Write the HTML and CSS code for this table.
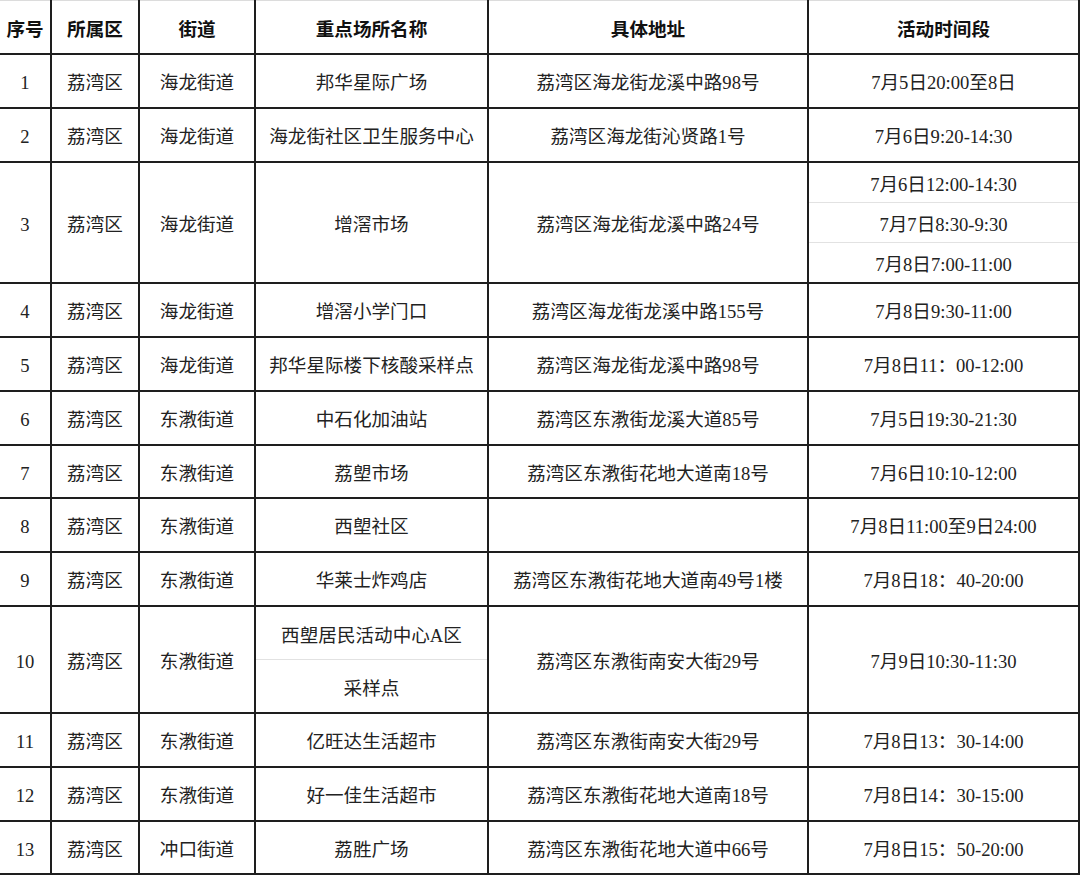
FILE: index.html
```html
<!DOCTYPE html>
<html lang="zh-CN">
<head>
<meta charset="utf-8">
<title>重点场所</title>
<link rel="stylesheet" href="styles.css">
</head>
<body>
<table class="sites">
  <colgroup>
    <col class="c-no">
    <col class="c-dist">
    <col class="c-street">
    <col class="c-name">
    <col class="c-addr">
    <col class="c-time">
  </colgroup>
  <thead>
    <tr class="h-head">
      <th>序号</th><th>所属区</th><th>街道</th><th>重点场所名称</th><th>具体地址</th><th>活动时间段</th>
    </tr>
  </thead>
  <tbody>
    <tr class="h54"><td>1</td><td>荔湾区</td><td>海龙街道</td><td>邦华星际广场</td><td>荔湾区海龙街龙溪中路98号</td><td>7月5日20:00至8日</td></tr>
    <tr class="h54"><td>2</td><td>荔湾区</td><td>海龙街道</td><td>海龙街社区卫生服务中心</td><td>荔湾区海龙街沁贤路1号</td><td>7月6日9:20-14:30</td></tr>
    <tr class="h41"><td rowspan="3">3</td><td rowspan="3">荔湾区</td><td rowspan="3">海龙街道</td><td rowspan="3">增滘市场</td><td rowspan="3">荔湾区海龙街龙溪中路24号</td><td class="sub-top">7月6日12:00-14:30</td></tr>
    <tr class="h40"><td class="sub-mid">7月7日8:30-9:30</td></tr>
    <tr class="h40"><td class="sub-bot">7月8日7:00-11:00</td></tr>
    <tr class="h54"><td>4</td><td>荔湾区</td><td>海龙街道</td><td>增滘小学门口</td><td>荔湾区海龙街龙溪中路155号</td><td>7月8日9:30-11:00</td></tr>
    <tr class="h54"><td>5</td><td>荔湾区</td><td>海龙街道</td><td>邦华星际楼下核酸采样点</td><td>荔湾区海龙街龙溪中路98号</td><td>7月8日11：00-12:00</td></tr>
    <tr class="h54"><td>6</td><td>荔湾区</td><td>东漖街道</td><td>中石化加油站</td><td>荔湾区东漖街龙溪大道85号</td><td>7月5日19:30-21:30</td></tr>
    <tr class="h53"><td>7</td><td>荔湾区</td><td>东漖街道</td><td>荔塱市场</td><td>荔湾区东漖街花地大道南18号</td><td>7月6日10:10-12:00</td></tr>
    <tr class="h54"><td>8</td><td>荔湾区</td><td>东漖街道</td><td>西塱社区</td><td></td><td>7月8日11:00至9日24:00</td></tr>
    <tr class="h54"><td>9</td><td>荔湾区</td><td>东漖街道</td><td>华莱士炸鸡店</td><td>荔湾区东漖街花地大道南49号1楼</td><td>7月8日18：40-20:00</td></tr>
    <tr class="h54"><td rowspan="2">10</td><td rowspan="2">荔湾区</td><td rowspan="2">东漖街道</td><td class="sub-top">西塱居民活动中心A区</td><td rowspan="2">荔湾区东漖街南安大街29号</td><td rowspan="2">7月9日10:30-11:30</td></tr>
    <tr class="h53"><td class="sub-bot">采样点</td></tr>
    <tr class="h54"><td>11</td><td>荔湾区</td><td>东漖街道</td><td>亿旺达生活超市</td><td>荔湾区东漖街南安大街29号</td><td>7月8日13：30-14:00</td></tr>
    <tr class="h54"><td>12</td><td>荔湾区</td><td>东漖街道</td><td>好一佳生活超市</td><td>荔湾区东漖街花地大道南18号</td><td>7月8日14：30-15:00</td></tr>
    <tr class="h53"><td>13</td><td>荔湾区</td><td>冲口街道</td><td>荔胜广场</td><td>荔湾区东漖街花地大道中66号</td><td>7月8日15：50-20:00</td></tr>
  </tbody>
</table>
</body>
</html>
```

FILE: styles.css
```css
html, body {
  margin: 0;
  padding: 0;
  background: #ffffff;
}

.sites {
  border-collapse: collapse;
  table-layout: fixed;
  width: 1079px;
  font-family: "Liberation Serif", "Noto Sans CJK SC", serif;
  font-size: 18.6px;
  color: #222222;
  border-top: 1px solid #dcdcdc;
}

.c-no { width: 51px; }
.c-dist { width: 88px; }
.c-street { width: 116px; }
.c-name { width: 233px; }
.c-addr { width: 320px; }
.c-time { width: 271px; }

.sites th,
.sites td {
  border: 2px solid #1e1e1e;
  padding: 6px 0 0;
  text-align: center;
  vertical-align: middle;
  white-space: nowrap;
  line-height: 1.2;
}

.sites th {
  font-weight: bold;
  border-top: 1px solid #dcdcdc;
  color: #111111;
}

.sites tr > :first-child {
  border-left: none;
}

.time {
  letter-spacing: 0.3px;
}

.h-head { height: 53px; }
.h54 { height: 54px; }
.h53 { height: 53px; }
.h41 { height: 41px; }
.h40 { height: 40px; }

.sites td.sub-top {
  border-bottom: 1px solid #e2e2e2;
}

.sites td.sub-mid {
  border-top: 1px solid #e2e2e2;
  border-bottom: 1px solid #e2e2e2;
}

.sites td.sub-bot {
  border-top: 1px solid #e2e2e2;
}
```
